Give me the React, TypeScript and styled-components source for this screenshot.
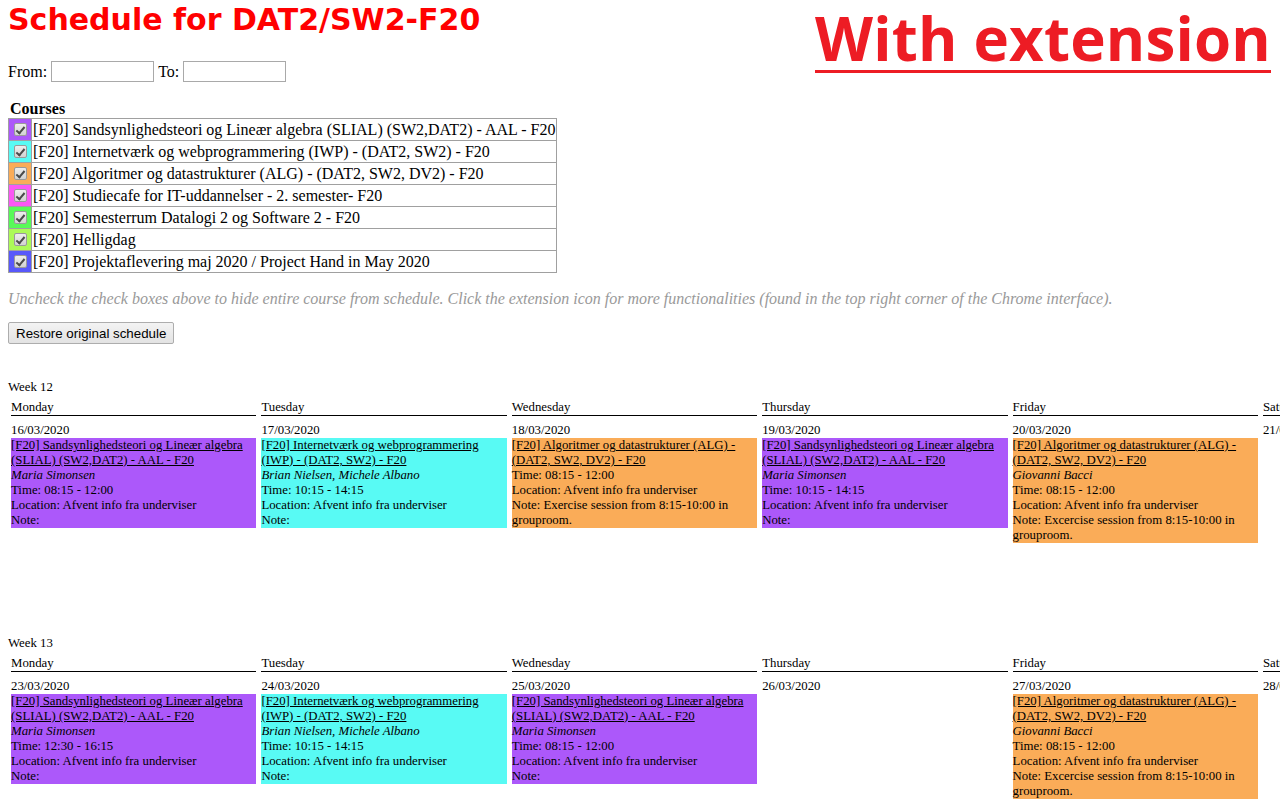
import React from "react";
import styled, { createGlobalStyle } from "styled-components";

const GlobalStyle = createGlobalStyle`
  html, body { margin: 0; padding: 0; background: #fff; }
  body {
    font-family: "Liberation Serif", "Times New Roman", serif;
    color: #000;
    overflow: hidden;
  }
`;

const Page = styled.div`
  position: relative;
  width: 1280px;
  height: 800px;
  padding: 0 8px;
  box-sizing: border-box;
  overflow: hidden;
`;

const Title = styled.h1`
  margin: 0;
  font-family: "DejaVu Sans", sans-serif;
  font-weight: bold;
  font-size: 30px;
  line-height: 40px;
  color: #ff0000;
`;

const Badge = styled.div`
  position: absolute;
  top: 8px;
  left: 815px;
  font-family: "Open Sans", sans-serif;
  font-weight: 700;
  font-size: 60px;
  line-height: 60px;
  letter-spacing: 0.2px;
  color: #ed1c24;
  padding-bottom: 2px;
  border-bottom: 3px solid #ed1c24;
  white-space: nowrap;
`;

const DateRow = styled.div`
  display: flex;
  align-items: center;
  gap: 4px;
  margin-top: 21px;
  height: 21px;
  font-size: 16px;
`;

const DateInput = styled.input`
  width: 103px;
  height: 21px;
  box-sizing: border-box;
  margin: 0;
  padding: 1px 2px;
  border: 1px solid #a9a9a9;
  font-family: "Liberation Sans", Arial, sans-serif;
  font-size: 13px;
`;

const CoursesHeading = styled.div`
  margin-top: 17px;
  padding-left: 2px;
  font-weight: bold;
  font-size: 16px;
  line-height: 19px;
`;

const CourseTable = styled.table`
  border-collapse: collapse;
  font-size: 16px;
`;

const CourseRow = styled.tr`
  height: 22px;
`;

const ColorCell = styled.td<{ $color: string }>`
  width: 22px;
  padding: 0;
  border: 1px solid #a0a0a0;
  background: ${(p) => p.$color};
  vertical-align: middle;
`;

const NameCell = styled.td`
  padding: 0 1px;
  border: 1px solid #a0a0a0;
  line-height: 20px;
  white-space: nowrap;
`;

const Check = styled.input`
  appearance: none;
  -webkit-appearance: none;
  display: block;
  position: relative;
  width: 13px;
  height: 13px;
  margin: 0 auto;
  box-sizing: border-box;
  border: 1px solid #9a9a9a;
  border-radius: 2px;
  background: linear-gradient(#eeeeee, #d2d2d2);
  &::after {
    content: "";
    position: absolute;
    left: 3.5px;
    top: 0.5px;
    width: 3px;
    height: 7px;
    border: solid #4a4a4a;
    border-width: 0 2px 2px 0;
    transform: rotate(40deg);
  }
`;

const Hint = styled.p`
  margin: 17px 0 0;
  font-style: italic;
  font-size: 16px;
  line-height: 18px;
  color: #999999;
  white-space: nowrap;
`;

const RestoreButton = styled.button`
  display: block;
  margin-top: 14px;
  height: 22px;
  padding: 1px 7px;
  box-sizing: border-box;
  border: 1px solid #adadad;
  border-radius: 2px;
  background: linear-gradient(#f3f3f3, #e3e3e3);
  font-family: "Liberation Sans", Arial, sans-serif;
  font-size: 13.33px;
  color: #000;
`;

const WeekList = styled.div`
  display: flex;
  flex-direction: column;
  gap: 93px;
  margin-top: 36px;
`;

const Week = styled.section`
  font-size: 12.8px;
  line-height: 15px;
`;

const DayGrid = styled.div`
  display: grid;
  grid-template-columns: repeat(7, 245.4px);
  column-gap: 5px;
  align-items: start;
  margin-top: 5px;
  padding-left: 3px;
`;

const Day = styled.div`
  display: flex;
  flex-direction: column;
`;

const DayName = styled.div`
  border-bottom: 1px solid #000;
`;

const DateLabel = styled.div`
  margin-top: 7px;
`;

const EventBox = styled.div<{ $color: string }>`
  background: ${(p) => p.$color};
`;

const EventTitle = styled.a`
  color: #000;
  text-decoration: underline;
`;

const Lecturer = styled.div`
  font-style: italic;
`;

const C = {
  slial: "#ac58fa",
  iwp: "#58faf4",
  alg: "#faac58",
  cafe: "#fa58f4",
  room: "#58fa58",
  holiday: "#acfa58",
  project: "#5858fa",
};

const courses = [
  { color: C.slial, name: "[F20] Sandsynlighedsteori og Lineær algebra (SLIAL) (SW2,DAT2) - AAL - F20" },
  { color: C.iwp, name: "[F20] Internetværk og webprogrammering (IWP) - (DAT2, SW2) - F20" },
  { color: C.alg, name: "[F20] Algoritmer og datastrukturer (ALG) - (DAT2, SW2, DV2) - F20" },
  { color: C.cafe, name: "[F20] Studiecafe for IT-uddannelser - 2. semester- F20" },
  { color: C.room, name: "[F20] Semesterrum Datalogi 2 og Software 2 - F20" },
  { color: C.holiday, name: "[F20] Helligdag" },
  { color: C.project, name: "[F20] Projektaflevering maj 2020 / Project Hand in May 2020" },
];

type Ev = { color: string; title: string; lecturer?: string; time: string; note: string };

const SLIAL = "[F20] Sandsynlighedsteori og Lineær algebra (SLIAL) (SW2,DAT2) - AAL - F20";
const IWP = "[F20] Internetværk og webprogrammering (IWP) - (DAT2, SW2) - F20";
const ALG = "[F20] Algoritmer og datastrukturer (ALG) - (DAT2, SW2, DV2) - F20";

const dayNames = ["Monday", "Tuesday", "Wednesday", "Thursday", "Friday", "Saturday", "Sunday"];

const weeks: { label: string; dates: string[]; events: (Ev | null)[] }[] = [
  {
    label: "Week 12",
    dates: ["16/03/2020", "17/03/2020", "18/03/2020", "19/03/2020", "20/03/2020", "21/03/2020", "22/03/2020"],
    events: [
      { color: C.slial, title: SLIAL, lecturer: "Maria Simonsen", time: "08:15 - 12:00", note: "" },
      { color: C.iwp, title: IWP, lecturer: "Brian Nielsen, Michele Albano", time: "10:15 - 14:15", note: "" },
      { color: C.alg, title: ALG, time: "08:15 - 12:00", note: "Exercise session from 8:15-10:00 in grouproom." },
      { color: C.slial, title: SLIAL, lecturer: "Maria Simonsen", time: "10:15 - 14:15", note: "" },
      { color: C.alg, title: ALG, lecturer: "Giovanni Bacci", time: "08:15 - 12:00", note: "Excercise session from 8:15-10:00 in grouproom." },
      null,
      null,
    ],
  },
  {
    label: "Week 13",
    dates: ["23/03/2020", "24/03/2020", "25/03/2020", "26/03/2020", "27/03/2020", "28/03/2020", "29/03/2020"],
    events: [
      { color: C.slial, title: SLIAL, lecturer: "Maria Simonsen", time: "12:30 - 16:15", note: "" },
      { color: C.iwp, title: IWP, lecturer: "Brian Nielsen, Michele Albano", time: "10:15 - 14:15", note: "" },
      { color: C.slial, title: SLIAL, lecturer: "Maria Simonsen", time: "08:15 - 12:00", note: "" },
      null,
      { color: C.alg, title: ALG, lecturer: "Giovanni Bacci", time: "08:15 - 12:00", note: "Excercise session from 8:15-10:00 in grouproom." },
      null,
      null,
    ],
  },
];

function EventCard({ ev }: { ev: Ev }) {
  return (
    <EventBox $color={ev.color}>
      <EventTitle href="#">{ev.title}</EventTitle>
      {ev.lecturer && <Lecturer>{ev.lecturer}</Lecturer>}
      <div>Time: {ev.time}</div>
      <div>Location: Afvent info fra underviser</div>
      <div>Note: {ev.note}</div>
    </EventBox>
  );
}

export default function App() {
  return (
    <Page>
      <GlobalStyle />
      <Title>Schedule for DAT2/SW2-F20</Title>
      <Badge>With extension</Badge>
      <DateRow>
        <span>From:</span>
        <DateInput type="text" />
        <span>To:</span>
        <DateInput type="text" />
      </DateRow>
      <CoursesHeading>Courses</CoursesHeading>
      <CourseTable>
        <tbody>
          {courses.map((c) => (
            <CourseRow key={c.name}>
              <ColorCell $color={c.color}>
                <Check type="checkbox" defaultChecked />
              </ColorCell>
              <NameCell>{c.name}</NameCell>
            </CourseRow>
          ))}
        </tbody>
      </CourseTable>
      <Hint>
        Uncheck the check boxes above to hide entire course from schedule. Click the extension icon for more
        functionalities (found in the top right corner of the Chrome interface).
      </Hint>
      <RestoreButton>Restore original schedule</RestoreButton>
      <WeekList>
        {weeks.map((w) => (
          <Week key={w.label}>
            <div>{w.label}</div>
            <DayGrid>
              {dayNames.map((d, i) => (
                <Day key={d}>
                  <DayName>{d}</DayName>
                  <DateLabel>{w.dates[i]}</DateLabel>
                  {w.events[i] && <EventCard ev={w.events[i] as Ev} />}
                </Day>
              ))}
            </DayGrid>
          </Week>
        ))}
      </WeekList>
    </Page>
  );
}
